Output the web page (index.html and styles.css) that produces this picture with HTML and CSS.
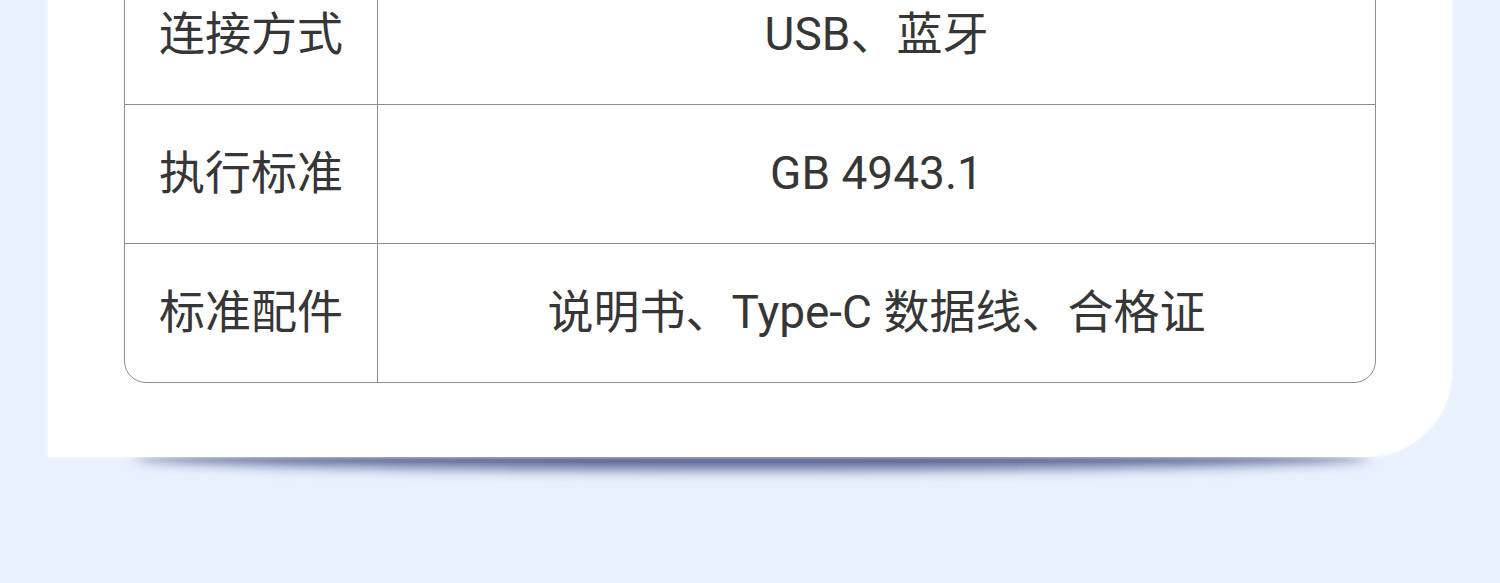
FILE: index.html
```html
<!DOCTYPE html>
<html lang="zh-CN">

<head>
    <meta charset="UTF-8">
    <meta name="viewport" content="width=device-width, initial-scale=1.0">
    <title>产品参数</title>
    <link rel="stylesheet" href="styles.css">
</head>

<body>
    <div class="card">
        <div class="spec">
            <div class="row">
                <div class="label">连接方式</div>
                <div class="value">USB、蓝牙</div>
            </div>
            <div class="row">
                <div class="label">执行标准</div>
                <div class="value">GB 4943.1</div>
            </div>
            <div class="row">
                <div class="label">标准配件</div>
                <div class="value">说明书、Type-C 数据线、合格证</div>
            </div>
        </div>
    </div>
</body>

</html>
```

FILE: styles.css
```css
* {
    box-sizing: border-box;
    margin: 0;
    padding: 0;
}
html, body {
    height: 100%;
}
body {
    background-color: #eaf1fe;
    font-family: Roboto, "Noto Sans CJK SC", sans-serif;
    color: #363636;
    overflow: hidden;
}
.card {
    position: relative;
    width: 1404px;
    margin: -60px 0 0 48px;
    padding: 25px 76px 74px 76px;
    background-color: #fff;
    border-radius: 0 0 86px 0;
    box-shadow: 0 0 4px rgba(255, 255, 255, 0.9);
}
/* soft bluish shadow under the card */
.card::after {
    content: "";
    position: absolute;
    left: 86px;
    right: 82px;
    bottom: -12px;
    height: 28px;
    border-radius: 50%;
    background-color: rgb(78, 92, 142);
    filter: blur(7px);
    z-index: -1;
}
.spec {
    border: 1px solid #8e8e8e;
    border-radius: 0 0 22px 22px;
    overflow: hidden;
}
.row {
    display: grid;
    grid-template-columns: 253px 1fr;
    height: 139px;
    border-top: 1px solid #8e8e8e;
}
.row:first-child {
    border-top: none;
    height: 138px;
}
.label,
.value {
    display: flex;
    align-items: center;
    justify-content: center;
    font-size: 46px;
    line-height: 1.2;
}
.label {
    border-right: 1px solid #8e8e8e;
}
```
